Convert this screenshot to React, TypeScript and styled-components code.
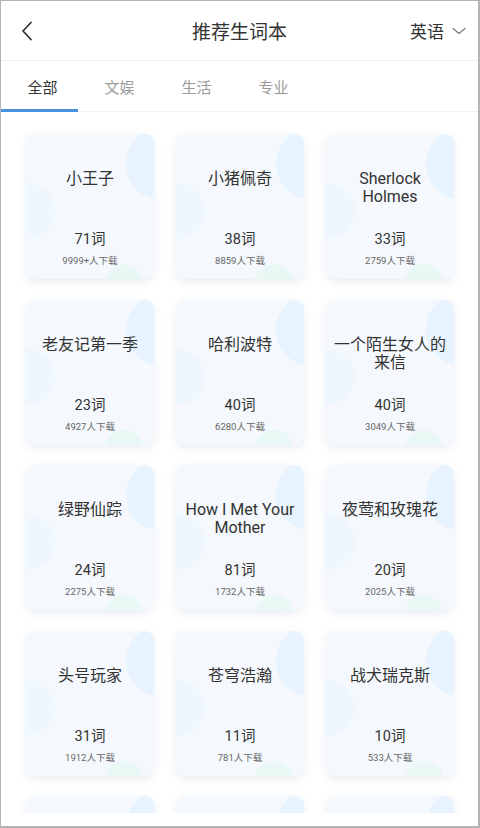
import React, { useState } from "react";
import styled, { createGlobalStyle } from "styled-components";

const GlobalStyle = createGlobalStyle`
  html, body {
    margin: 0;
    padding: 0;
    background: #ffffff;
  }
  body {
    font-family: Roboto, "Noto Sans CJK SC", sans-serif;
    color: #333333;
  }
`;

interface Book {
  title: string;
  words: number;
  downloads: string;
}

const TABS = ["全部", "文娱", "生活", "专业"];

const BOOKS: Book[] = [
  { title: "小王子", words: 71, downloads: "9999+" },
  { title: "小猪佩奇", words: 38, downloads: "8859" },
  { title: "Sherlock Holmes", words: 33, downloads: "2759" },
  { title: "老友记第一季", words: 23, downloads: "4927" },
  { title: "哈利波特", words: 40, downloads: "6280" },
  { title: "一个陌生女人的来信", words: 40, downloads: "3049" },
  { title: "绿野仙踪", words: 24, downloads: "2275" },
  { title: "How I Met Your Mother", words: 81, downloads: "1732" },
  { title: "夜莺和玫瑰花", words: 20, downloads: "2025" },
  { title: "头号玩家", words: 31, downloads: "1912" },
  { title: "苍穹浩瀚", words: 11, downloads: "781" },
  { title: "战犬瑞克斯", words: 10, downloads: "533" },
  { title: "", words: 0, downloads: "" },
  { title: "", words: 0, downloads: "" },
  { title: "", words: 0, downloads: "" },
];

const BackIcon = () => (
  <svg width="14" height="20" viewBox="0 0 14 20">
    <path d="M11 1.5 L3 10 L11 18.5" fill="none" stroke="#333" strokeWidth="1.8" strokeLinecap="round" strokeLinejoin="round" />
  </svg>
);

const ChevronDown = () => (
  <svg width="14" height="8" viewBox="0 0 14 8">
    <path d="M1 1.5 L7 6.5 L13 1.5" fill="none" stroke="#777" strokeWidth="1.2" strokeLinecap="round" strokeLinejoin="round" />
  </svg>
);

const BookCard = ({ book }: { book: Book }) => (
  <Card>
    <BlobTop />
    <BlobLeft />
    <BlobBottom />
    {book.title && (
      <>
        <CardTitle>{book.title}</CardTitle>
        <WordCount>{book.words}词</WordCount>
        <Downloads>{book.downloads}人下载</Downloads>
      </>
    )}
  </Card>
);

export default function App() {
  const [active, setActive] = useState(0);

  return (
    <>
      <GlobalStyle />
      <Screen>
        <Header>
          <BackButton>
            <BackIcon />
          </BackButton>
          <Title>推荐生词本</Title>
          <LangPicker>
            <span>英语</span>
            <ChevronDown />
          </LangPicker>
        </Header>
        <TabBar>
          {TABS.map((t, i) => (
            <Tab key={t} $active={i === active} onClick={() => setActive(i)}>
              {t}
            </Tab>
          ))}
        </TabBar>
        <Scroller>
          <Grid>
            {BOOKS.map((b, i) => (
              <BookCard key={i} book={b} />
            ))}
          </Grid>
        </Scroller>
      </Screen>
    </>
  );
}

const Screen = styled.div`
  width: 480px;
  height: 828px;
  box-sizing: border-box;
  border: 1px solid #b4b4b4;
  border-right-width: 2px;
  border-bottom-width: 2px;
  background: #ffffff;
  display: flex;
  flex-direction: column;
  overflow: hidden;
`;

const Header = styled.div`
  height: 59px;
  display: flex;
  align-items: center;
  justify-content: space-between;
  padding: 0 12px 0 19px;
  border-bottom: 1px solid #eef2f7;
  position: relative;
`;

const BackButton = styled.div`
  width: 40px;
  display: flex;
  align-items: center;
  padding-top: 1px;
`;

const Title = styled.div`
  position: absolute;
  left: 0;
  right: 0;
  text-align: center;
  font-size: 19px;
  color: #333;
  pointer-events: none;
`;

const LangPicker = styled.div`
  display: flex;
  align-items: center;
  gap: 8px;
  font-size: 17px;
  color: #333;

  svg {
    margin-top: 1px;
  }
`;

const TabBar = styled.div`
  height: 50px;
  display: flex;
  border-bottom: 1px solid #eef2f7;
`;

const Tab = styled.div<{ $active: boolean }>`
  width: 77px;
  box-sizing: border-box;
  padding-left: 6px;
  padding-top: 2px;
  display: flex;
  align-items: center;
  justify-content: center;
  font-size: 15px;
  color: ${(p) => (p.$active ? "#333" : "#9a9a9a")};
  border-bottom: 3px solid ${(p) => (p.$active ? "#4a90e2" : "transparent")};
  margin-bottom: -1px;
  cursor: pointer;
`;

const Scroller = styled.div`
  height: 701px;
  overflow: hidden;
`;

const Grid = styled.div`
  display: grid;
  grid-template-columns: repeat(3, 128px);
  column-gap: 22px;
  row-gap: 20.5px;
  padding: 22px 0 0 25px;
`;

const Card = styled.div`
  position: relative;
  height: 145px;
  border-radius: 9px;
  background: #f5f9fd;
  box-shadow: 0 3px 9px rgba(120, 140, 170, 0.16);
  overflow: hidden;
  display: flex;
  flex-direction: column;
  align-items: center;
  padding: 36px 8px 12px;
  box-sizing: border-box;
`;

const BlobTop = styled.div`
  position: absolute;
  width: 66px;
  height: 70px;
  border-radius: 50%;
  right: -38px;
  top: -5px;
  background: #e7f3fe;
`;

const BlobLeft = styled.div`
  position: absolute;
  width: 56px;
  height: 56px;
  border-radius: 50%;
  left: -27px;
  top: 49px;
  background: #eff7fe;
`;

const BlobBottom = styled.div`
  position: absolute;
  width: 38px;
  height: 36px;
  border-radius: 50%;
  left: 79px;
  bottom: -21px;
  background: #eaf8f5;
`;

const CardTitle = styled.div`
  position: relative;
  font-size: 16px;
  line-height: 18px;
  text-align: center;
  color: #333;
  flex: 1;
`;

const WordCount = styled.div`
  position: relative;
  font-size: 14.5px;
  line-height: 18px;
  color: #333;
  margin-bottom: 6px;
`;

const Downloads = styled.div`
  position: relative;
  font-size: 9.5px;
  line-height: 12px;
  color: #666;
`;
